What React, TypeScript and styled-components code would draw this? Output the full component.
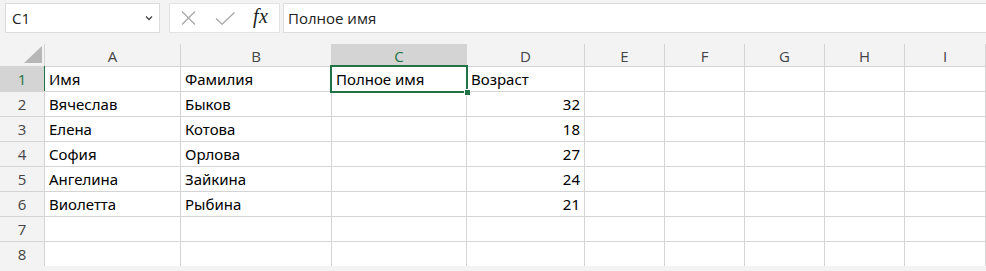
import React from "react";
import styled, { createGlobalStyle } from "styled-components";

const Global = createGlobalStyle`
  html, body { margin: 0; padding: 0; background: #ffffff; }
  body { font-family: "Noto Sans", "Open Sans", sans-serif; overflow: hidden; }
`;

const Page = styled.div`
  width: 986px;
  height: 271px;
  display: flex;
  flex-direction: column;
  background: #f3f3f3;
  overflow: hidden;
`;

const Toolbar = styled.div`
  height: 44px;
  box-sizing: border-box;
  padding: 3px 0 0 5px;
  display: flex;
  align-items: flex-start;
`;

const NameBox = styled.div`
  width: 155px;
  height: 30px;
  box-sizing: border-box;
  border: 1px solid #dcdcdc;
  background: #fff;
  display: flex;
  align-items: center;
  justify-content: space-between;
  padding: 0 6px 0 6px;
  font-family: "Open Sans", "Noto Sans", sans-serif;
  font-size: 15px;
  color: #222;
`;

const Buttons = styled.div`
  margin-left: 9px;
  width: 111px;
  height: 30px;
  box-sizing: border-box;
  border: 1px solid #e2e2e2;
  background: #fff;
  display: flex;
  align-items: center;
  padding-left: 11px;
`;

const IconSlot = styled.div<{ $w: number }>`
  width: ${(p) => p.$w}px;
  height: 28px;
  display: flex;
  align-items: center;
`;

const Fx = styled.span`
  font-family: "Liberation Serif", "DejaVu Serif", serif;
  font-style: italic;
  font-size: 20px;
  color: #222;
  letter-spacing: 0.5px;
  margin-top: -3px;
`;

const FormulaInput = styled.div`
  margin-left: 3px;
  flex: 1;
  height: 30px;
  box-sizing: border-box;
  border: 1px solid #dcdcdc;
  border-right: none;
  background: #fff;
  display: flex;
  align-items: center;
  padding-left: 4px;
  font-family: "Open Sans", "Noto Sans", sans-serif;
  font-size: 15px;
  color: #222;
`;

const Grid = styled.div`
  display: grid;
  grid-template-columns: 44px 135px 150px 134px 117px 79px 79px 79px 79px 80px 10px;
  grid-template-rows: 22px repeat(8, 24px);
  gap: 1px;
  background: #d4d4d4;
`;

const ColHead = styled.div<{ $sel?: boolean }>`
  background: ${(p) => (p.$sel ? "#d4d4d4" : "#f3f3f3")};
  color: ${(p) => (p.$sel ? "#217346" : "#444")};
  font-family: "Open Sans", "Noto Sans", sans-serif;
  font-size: 15px;
  display: flex;
  align-items: center;
  justify-content: center;
  padding-top: 2px;
  box-sizing: border-box;
`;

const Corner = styled.div`
  background: #f3f3f3;
  position: relative;
`;

const Triangle = styled.div`
  position: absolute;
  right: 2px;
  bottom: 3px;
  width: 0;
  height: 0;
  border-left: 18px solid transparent;
  border-bottom: 17px solid #b7b7b7;
`;

const RowHead = styled.div<{ $sel?: boolean }>`
  background: ${(p) => (p.$sel ? "#d4d4d4" : "#f3f3f3")};
  color: ${(p) => (p.$sel ? "#217346" : "#444")};
  font-family: "Open Sans", "Noto Sans", sans-serif;
  font-size: 15px;
  display: flex;
  align-items: center;
  justify-content: center;
  position: relative;
  &::after {
    content: "";
    display: ${(p) => (p.$sel ? "block" : "none")};
    position: absolute;
    right: -1px;
    top: -1px;
    bottom: 0;
    width: 1px;
    background: #217346;
  }
`;

const Cell = styled.div<{ $num?: boolean }>`
  background: #fff;
  display: flex;
  align-items: flex-end;
  justify-content: ${(p) => (p.$num ? "flex-end" : "flex-start")};
  padding: 0 4px 1px 4px;
  box-sizing: border-box;
  font-family: "Noto Sans", "Open Sans", sans-serif;
  font-size: 15px;
  line-height: 22px;
  color: #000;
  white-space: nowrap;
  position: relative;
`;

const Edge = styled.div`
  background: #fff;
`;

const Selection = styled.div`
  position: absolute;
  z-index: 2;
  left: -2px;
  top: -2px;
  right: -2px;
  bottom: -2px;
  border: 2px solid #217346;
  pointer-events: none;
`;

const Handle = styled.div`
  position: absolute;
  right: -5px;
  bottom: -5px;
  width: 5px;
  height: 5px;
  background: #217346;
  border: 1px solid #fff;
`;

const cols = ["A", "B", "C", "D", "E", "F", "G", "H", "I"];

const rows: (string | number)[][] = [
  ["Имя", "Фамилия", "Полное имя", "Возраст"],
  ["Вячеслав", "Быков", "", 32],
  ["Елена", "Котова", "", 18],
  ["София", "Орлова", "", 27],
  ["Ангелина", "Зайкина", "", 24],
  ["Виолетта", "Рыбина", "", 21],
  [],
  [],
];

export default function App() {
  return (
    <>
      <Global />
      <Page>
        <Toolbar>
          <NameBox>
            <span>C1</span>
            <svg width="8" height="6" viewBox="0 0 8 6">
              <path d="M1 1.5 L4 4.5 L7 1.5" fill="none" stroke="#444" strokeWidth="1.3" />
            </svg>
          </NameBox>
          <Buttons>
            <IconSlot $w={34}>
              <svg width="15" height="14" viewBox="0 0 15 14">
                <path d="M1 0.5 L14 13.5 M14 0.5 L1 13.5" stroke="#a6a6a6" strokeWidth="1.2" fill="none" />
              </svg>
            </IconSlot>
            <IconSlot $w={38}>
              <svg width="20" height="13" viewBox="0 0 20 13">
                <path d="M1 6.5 L7 12.3 L19.5 0.5" stroke="#a6a6a6" strokeWidth="1.2" fill="none" />
              </svg>
            </IconSlot>
            <IconSlot $w={20}>
              <Fx>fx</Fx>
            </IconSlot>
          </Buttons>
          <FormulaInput>Полное имя</FormulaInput>
        </Toolbar>
        <Grid>
          <Corner>
            <Triangle />
          </Corner>
          {cols.map((c) => (
            <ColHead key={c} $sel={c === "C"}>
              {c}
            </ColHead>
          ))}
          <Edge />
          {rows.map((r, ri) => (
            <React.Fragment key={ri}>
              <RowHead $sel={ri === 0}>{ri + 1}</RowHead>
              {cols.map((c, ci) => {
                const v = r[ci];
                return (
                  <Cell key={c} $num={typeof v === "number"}>
                    {v ?? ""}
                    {ri === 0 && c === "C" && (
                      <Selection>
                        <Handle />
                      </Selection>
                    )}
                  </Cell>
                );
              })}
              <Edge />
            </React.Fragment>
          ))}
        </Grid>
      </Page>
    </>
  );
}
